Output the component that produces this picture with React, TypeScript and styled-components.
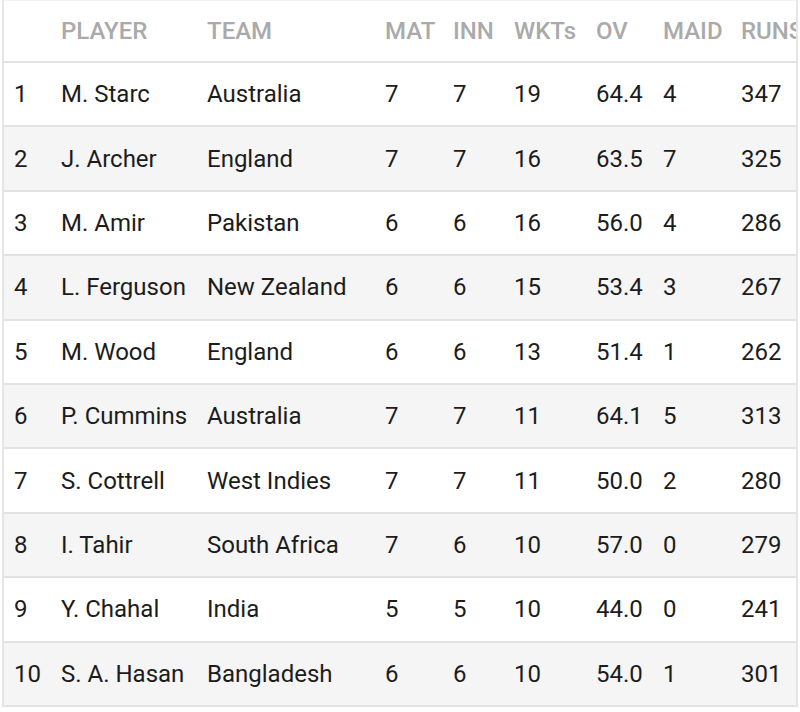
import React from "react";
import styled, { createGlobalStyle } from "styled-components";

const Global = createGlobalStyle`
  html, body { margin: 0; padding: 0; background: #ffffff; }
  body { font-family: Roboto, "Noto Sans", Arial, sans-serif; }
`;

const Page = styled.div`
  padding: 0 2px 0 2px;
  width: 800px;
  box-sizing: border-box;
`;

const Frame = styled.div`
  border-left: 2px solid #e6e6e6;
  border-right: 2px solid #e6e6e6;
  border-bottom: 2px solid #e2e2e2;
  border-top: 1px solid #f2f2f2;
  overflow: hidden;
`;

const COLS = "47px 146px 178px 68px 61px 82px 67px 78px 120px";

const Row = styled.div<{ $shade?: boolean; $head?: boolean }>`
  display: grid;
  grid-template-columns: ${COLS};
  height: ${(p) => (p.$head ? "62px" : "64.4px")};
  box-sizing: border-box;
  align-items: center;
  background: ${(p) => (p.$shade ? "#f5f5f5" : "#ffffff")};
  border-bottom: 2px solid #e2e2e2;
  &:last-child { border-bottom: none; height: 62.4px; }
`;

const Cell = styled.div<{ $head?: boolean }>`
  padding-left: 10px;
  white-space: nowrap;
  font-size: 24px;
  font-weight: ${(p) => (p.$head ? 500 : 400)};
  color: ${(p) => (p.$head ? "#aaaaaa" : "#1c1c1c")};
`;

const headers = ["", "PLAYER", "TEAM", "MAT", "INN", "WKTs", "OV", "MAID", "RUNS"];

const data: (string | number)[][] = [
  [1, "M. Starc", "Australia", 7, 7, 19, "64.4", 4, 347],
  [2, "J. Archer", "England", 7, 7, 16, "63.5", 7, 325],
  [3, "M. Amir", "Pakistan", 6, 6, 16, "56.0", 4, 286],
  [4, "L. Ferguson", "New Zealand", 6, 6, 15, "53.4", 3, 267],
  [5, "M. Wood", "England", 6, 6, 13, "51.4", 1, 262],
  [6, "P. Cummins", "Australia", 7, 7, 11, "64.1", 5, 313],
  [7, "S. Cottrell", "West Indies", 7, 7, 11, "50.0", 2, 280],
  [8, "I. Tahir", "South Africa", 7, 6, 10, "57.0", 0, 279],
  [9, "Y. Chahal", "India", 5, 5, 10, "44.0", 0, 241],
  [10, "S. A. Hasan", "Bangladesh", 6, 6, 10, "54.0", 1, 301],
];

export default function App() {
  return (
    <>
      <Global />
      <Page>
        <Frame>
          <Row $head>
            {headers.map((h, i) => (
              <Cell $head key={i}>{h}</Cell>
            ))}
          </Row>
          {data.map((r, i) => (
            <Row key={i} $shade={i % 2 === 1}>
              {r.map((v, j) => (
                <Cell key={j}>{v}</Cell>
              ))}
            </Row>
          ))}
        </Frame>
      </Page>
    </>
  );
}
